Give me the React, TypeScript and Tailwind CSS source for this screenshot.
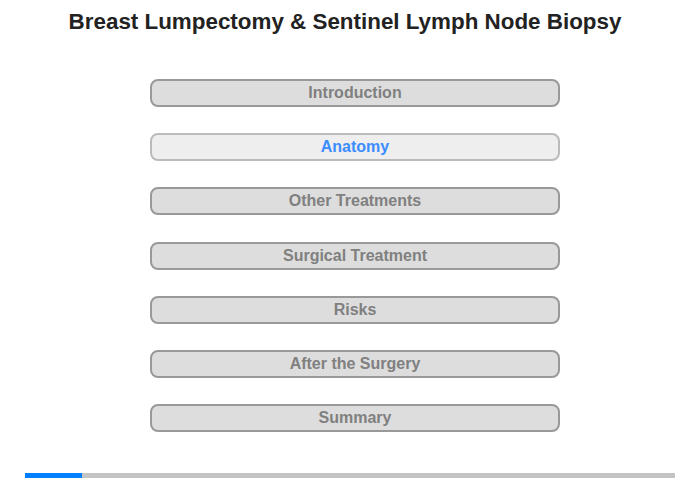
import React from "react";

export default function App() {
  const sections = [
    "Introduction",
    "Anatomy",
    "Other Treatments",
    "Surgical Treatment",
    "Risks",
    "After the Surgery",
    "Summary",
  ];
  const active = 1;

  return (
    <div className="w-[700px] h-[480px] bg-white flex flex-col font-['Liberation_Sans',Arial,sans-serif]">
      <h1 className="text-[22.4px] font-bold text-[#222] text-center pt-[8px] pr-[10px] leading-[28px]">
        Breast Lumpectomy &amp; Sentinel Lymph Node Biopsy
      </h1>
      <div className="flex flex-col items-center gap-[26.2px] mt-[43px] pl-[10px]">
        {sections.map((s, i) => (
          <button
            key={s}
            className={
              i === active
                ? "w-[410px] h-[28px] rounded-[8px] border-2 border-[#bbbbbb] bg-[#eeeeee] text-[#3b8cff] text-[16px] font-bold leading-[24px]"
                : "w-[410px] h-[28px] rounded-[8px] border-2 border-[#999999] bg-[#dddddd] text-[#808080] text-[16px] font-bold leading-[24px]"
            }
          >
            {s}
          </button>
        ))}
      </div>
      <div className="mt-[41px] mx-[25px] h-[5px] bg-[#c4c4c4] flex">
        <div className="w-[57px] h-full bg-[#0080ff]" />
      </div>
    </div>
  );
}
